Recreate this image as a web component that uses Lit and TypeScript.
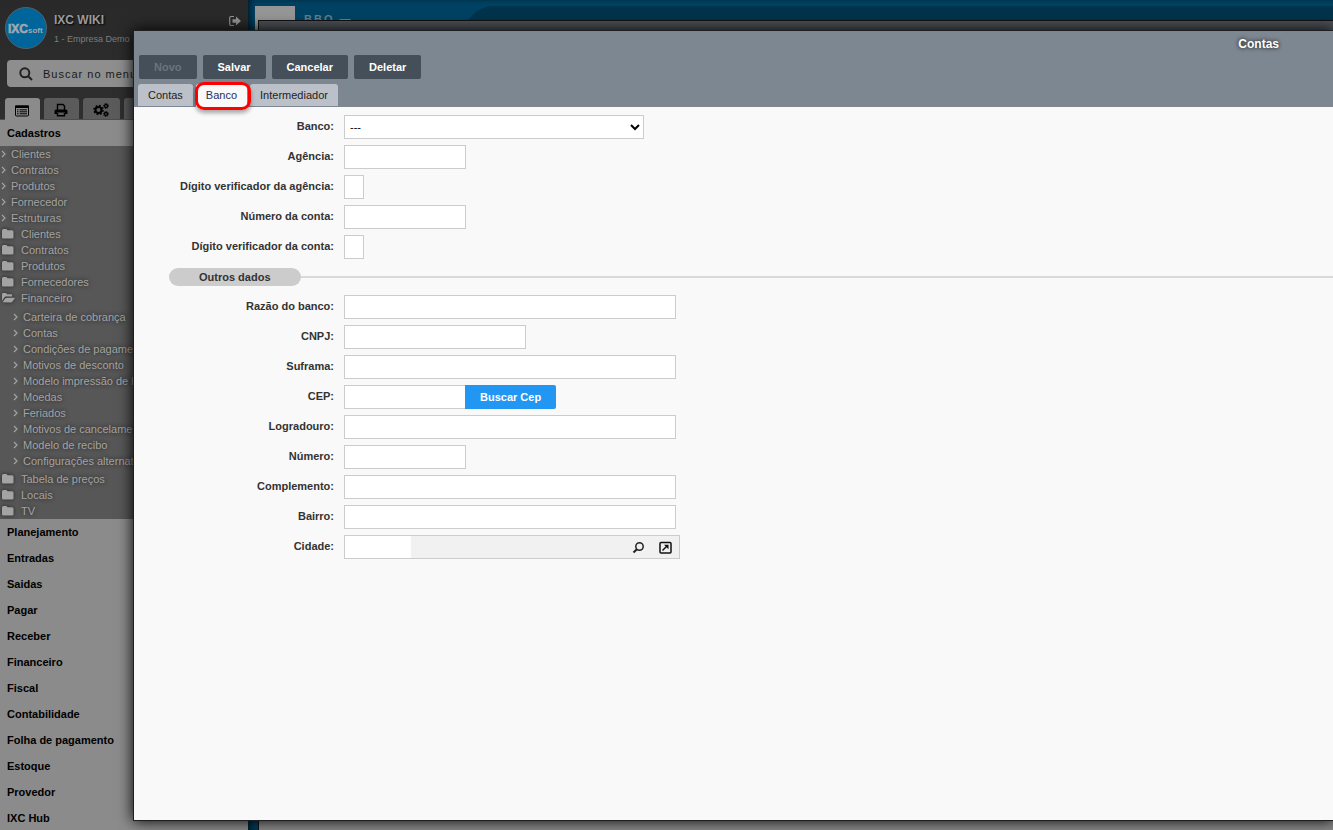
import { LitElement, html, css, svg } from "lit";
import { customElement } from "lit/decorators.js";

type Item = { label: string; kind: "link" | "folder" | "open" };

const topItems: Item[] = [
  ...["Clientes", "Contratos", "Produtos", "Fornecedor", "Estruturas"].map((label) => ({ label, kind: "link" as const })),
  ...["Clientes", "Contratos", "Produtos", "Fornecedores"].map((label) => ({ label, kind: "folder" as const })),
  { label: "Financeiro", kind: "open" },
];
const subItems = [
  "Carteira de cobrança", "Contas", "Condições de pagamento", "Motivos de desconto",
  "Modelo impressão de boleto", "Moedas", "Feriados", "Motivos de cancelamento",
  "Modelo de recibo", "Configurações alternativas",
];
const endItems: Item[] = ["Tabela de preços", "Locais", "TV"].map((label) => ({ label, kind: "folder" as const }));
const sections = [
  "Planejamento", "Entradas", "Saidas", "Pagar", "Receber", "Financeiro", "Fiscal",
  "Contabilidade", "Folha de pagamento", "Estoque", "Provedor", "IXC Hub",
];

const chevron = svg`<svg class="chev" viewBox="0 0 5 8"><path d="M1 1l3 3-3 3" fill="none" stroke="currentColor" stroke-width="1.2"/></svg>`;
const folder = svg`<svg class="fold" viewBox="0 0 13 10"><path d="M0 1.5Q0 0 1.500 0H4Q5.300 0 5.300 1.300H10Q11.500 1.300 11.500 2.800V8.300Q11.500 9.600 10 9.600H1.500Q0 9.600 0 8.300z" fill="currentColor"/></svg>`;
const folderOpen = svg`<svg class="fold" viewBox="0 0 13 10"><path d="M0 7.800V1.300Q0 0 1.300 0H3.500Q4.800 0 4.800 1.300H8.800Q10.200 1.300 10.200 2.600V3.600H4.300Q3 3.600 2.200 4.700z" fill="currentColor"/><path d="M.6 9.300L3.100 5.500Q3.700 4.700 4.700 4.700H12.300Q13 4.700 12.600 5.500L10.500 8.600Q9.900 9.400 8.900 9.400z" fill="currentColor"/></svg>`;

@customElement("side-menu")
export class SideMenu extends LitElement {
  static styles = css`
    :host {
      display: flex;
      flex-direction: column;
      min-height: 100%;
      background: #8b8b8b;
      font: 11px/16px "Liberation Sans", Arial, sans-serif;
      color: #000;
    }
    .head { background: linear-gradient(#292929, #2f2f2f); height: 120px; flex: none; }
    .brand { display: grid; grid-template-columns: 42px 1fr 12px; column-gap: 7px; padding: 7px 7px 0 5px; height: 53px; box-sizing: border-box; }
    .logo { width: 42px; height: 42px; }
    .logo text { font: bold 12px "Liberation Sans", Arial, sans-serif; fill: #9fa8ad; stroke: #9fa8ad; stroke-width: 0.6px; }
    .logo .small { font-size: 8px; stroke-width: 0; }
    .company { font-weight: bold; font-size: 12px; line-height: 16px; color: #9a9a9a; text-shadow: 1px 1px 2px #000; padding-top: 5px; }
    .branch { font-size: 9px; line-height: 12px; color: #7c7c7c; padding-top: 5px; }
    .exit { border: 0; padding: 0; height: 12px; margin-top: 8px; background: none; color: #969696; }
    .exit svg { display: block; width: 12px; height: 12px; }
    .search { display: flex; align-items: center; gap: 10px; height: 27px; margin: 7px 7px 0; padding-left: 12px; box-sizing: border-box; background: #8e8e8e; border-radius: 4px; }
    .search svg { width: 14px; height: 14px; flex: none; }
    .search input { border: 0; background: none; padding: 0; width: 160px; font: 11px/16px "Liberation Sans", Arial, sans-serif; letter-spacing: 1px; }
    .search input::placeholder { color: #1a1a1a; opacity: 1; }
    .tabs { display: flex; gap: 4px; margin-top: 11px; padding-left: 5px; height: 22px; box-sizing: border-box; border-bottom: 1px solid #4d4d4d; }
    .tab { width: 35px; height: 21px; padding: 3px 2px 0 0; border: 0; border-radius: 3px 3px 0 0; background: #5b5b5b; display: grid; place-items: center; color: #000; }
    .tab.on { background: #8b8b8b; height: 22px; }
    .tab.gears { width: 37px; }
    .tab svg { width: 16px; height: 14px; }
    .section { display: block; height: 26px; line-height: 26px; padding-left: 7px; font-weight: bold; color: #000; text-decoration: none; flex: none; }
    .tree { background: #575757; text-shadow: 0 0 4px #222; }
    .item { display: flex; align-items: center; height: 16px; color: #a3a3a3; text-decoration: none; white-space: nowrap; }
    .link { padding-left: 1px; gap: 5px; }
    .dir { padding-left: 2px; gap: 6px; }
    .sub { padding: 3px 0 2px 12px; }
    .chev { width: 5px; height: 8px; }
    .fold { width: 13px; height: 10px; filter: drop-shadow(0 0 2px #222); }
  `;

  private item(i: Item) {
    const icon = i.kind === "link" ? chevron : i.kind === "folder" ? folder : folderOpen;
    return html`<a href="#" class="item ${i.kind === "link" ? "link" : "dir"}">${icon}<span>${i.label}</span></a>`;
  }

  render() {
    return html`
      <div class="head">
        <div class="brand">
          <svg class="logo" viewBox="0 0 42 42">
            <circle cx="21" cy="21" r="20.500" fill="#00659b" stroke="#53626b"/>
            <text x="3" y="26">IXC</text><text class="small" x="23" y="26">soft</text>
          </svg>
          <div><div class="company">IXC WIKI</div><div class="branch">1 - Empresa Demo</div></div>
          <button class="exit" aria-label="Sair">
            <svg viewBox="0 0 12 12"><path d="M5 1.500H2Q.7 1.500.7 2.800V9.200Q.7 10.500 2 10.500H5" fill="none" stroke="currentColor" stroke-width="1.200"/><path d="M3.500 4.300H7V1.500L12 6 7 10.500V7.700H3.500z" fill="currentColor"/></svg>
          </button>
        </div>
        <div class="search">
          <svg viewBox="0 0 14 14" fill="none" stroke="#222" stroke-width="2"><circle cx="5.800" cy="5.800" r="4.500"/><path d="M9 9l4 4"/></svg>
          <input aria-label="Buscar no menu" placeholder="Buscar no menu">
        </div>
        <div class="tabs">
          <button class="tab on" aria-label="Menu"><svg viewBox="0 0 16 14"><rect x="1.500" y="2" width="13" height="10" rx="1" fill="none" stroke="#000"/><path d="M1 1.500h14v2.500H1z"/><path d="M3 5.800h1.500M3 7.800h1.500M3 9.800h1.500M5.500 5.800H13M5.500 7.800H13M5.500 9.800H13" stroke="#000"/></svg></button>
          <button class="tab" aria-label="Imprimir"><svg viewBox="0 0 16 14"><path d="M4.500 7V1.500H10L11.500 3V7" fill="none" stroke="#000" stroke-width="1.400"/><path d="M1.500 11V8Q1.500 6.500 3 6.500H13Q14.500 6.500 14.500 8V11H12V9.500H4V11z"/><path d="M4.500 10V12.800H11.500V10" fill="none" stroke="#000" stroke-width="1.400"/></svg></button>
          <button class="tab gears" aria-label="Configurar"><svg viewBox="0 0 16 14" fill="none" stroke="#000"><circle cx="5.500" cy="7" r="3" stroke-width="2"/><circle cx="5.500" cy="7" r="4.500" stroke-width="1.500" stroke-dasharray="1.800 1.734"/><circle cx="13" cy="3" r="1.500" stroke-width="1.300"/><circle cx="13" cy="3" r="2.500" stroke-dasharray="1 .963"/><circle cx="13" cy="11" r="1.500" stroke-width="1.300"/><circle cx="13" cy="11" r="2.500" stroke-dasharray="1 .963"/></svg></button>
          <button class="tab" aria-label="Mais"></button>
        </div>
      </div>
      <a href="#" class="section">Cadastros</a>
      <nav class="tree">
        ${topItems.map((i) => this.item(i))}
        <div class="sub">${subItems.map((label) => this.item({ label, kind: "link" }))}</div>
        ${endItems.map((i) => this.item(i))}
      </nav>
      ${sections.map((s) => html`<a href="#" class="section">${s}</a>`)}
    `;
  }
}

type Field = { id: string; label: string; size: string };

const accountFields: Field[] = [
  { id: "agencia", label: "Agência:", size: "mid" },
  { id: "dv-agencia", label: "Dígito verificador da agência:", size: "digit" },
  { id: "conta", label: "Número da conta:", size: "mid" },
  { id: "dv-conta", label: "Dígito verificador da conta:", size: "digit" },
];
const bankFields: Field[] = [
  { id: "razao", label: "Razão do banco:", size: "wide" },
  { id: "cnpj", label: "CNPJ:", size: "doc" },
  { id: "suframa", label: "Suframa:", size: "wide" },
  { id: "cep", label: "CEP:", size: "mid" },
  { id: "logradouro", label: "Logradouro:", size: "wide" },
  { id: "numero", label: "Número:", size: "mid" },
  { id: "complemento", label: "Complemento:", size: "wide" },
  { id: "bairro", label: "Bairro:", size: "wide" },
];

@customElement("account-dialog")
export class AccountDialog extends LitElement {
  static styles = css`
    :host {
      display: flex;
      flex-direction: column;
      box-sizing: border-box;
      border: 1px solid #1c2023;
      background: #f9f9f9;
      box-shadow: 0 0 14px #000;
      font: 11px/16px "Liberation Sans", Arial, sans-serif;
      color: #333;
      overflow: hidden;
    }
    :host * { box-sizing: border-box; }
    .top { background: #7d8791; height: 76px; flex: none; padding-left: 4px; }
    .title { height: 24px; line-height: 26px; margin: 0; padding-right: 54px; text-align: right; font-size: 12px; font-weight: bold; color: #fff; text-shadow: 0 0 4px #000; }
    .actions { display: flex; gap: 6px; padding-left: 1px; }
    .btn { height: 24px; border: 0; border-radius: 2px; padding: 0 15px; background: #454f59; color: #fff; font: bold 11px/24px "Liberation Sans", Arial, sans-serif; }
    .btn:disabled { color: #6b747c; }
    .tabs { display: flex; gap: 3px; padding-top: 5px; height: 28px; }
    .tab { height: 22px; border: 0; border-radius: 3px 3px 0 0; padding: 0 10px; background: #bcc1c9; color: #222; font: 11px/22px "Liberation Sans", Arial, sans-serif; }
    .tab.on { position: relative; z-index: 1; height: 23px; padding: 0 10px 1px; background: #f9f9f9; color: #25305a; }
    .mark { position: absolute; inset: -2px -4px -3px -1px; border: 3px solid #f00; border-radius: 9px; box-shadow: 0 3px 4px #0005; }
    form { padding-top: 8px; }
    .row { display: grid; grid-template-columns: 200px 1fr; column-gap: 10px; height: 30px; }
    label { text-align: right; font-weight: bold; line-height: 22px; }
    input, select { height: 24px; margin: 0; border: 1px solid #ccc; border-radius: 0; background: #fff; font: 11px "Liberation Sans", Arial, sans-serif; color: #000; }
    .ctl { display: flex; height: 24px; }
    select { width: 300px; padding: 0 0 0 1px; }
    .mid { width: 122px; }
    .digit { width: 20px; }
    .doc { width: 182px; }
    .wide { width: 332px; }
    .cep { height: 24px; margin-left: -1px; border: 0; border-radius: 0 2px 2px 0; padding: 0 15px; background: #2196f3; color: #fff; font: bold 11px "Liberation Sans", Arial, sans-serif; }
    .divider { display: flex; align-items: center; height: 18px; margin: 3px 0 9px 35px; }
    .pill { height: 18px; margin: 0; padding: 0 30px; border-radius: 9px; background: #ccc; font-size: 11px; line-height: 18px; }
    .rule { flex: 1; height: 2px; background: #d9d9d9; }
    .lookup { display: flex; align-items: center; width: 336px; height: 24px; border: 1px solid #ccc; background: #f1f1f1; }
    .lookup input { width: 66px; height: 22px; border: 0; margin-right: auto; }
    .icon { width: 13px; height: 13px; padding: 0; border: 0; background: none; }
    .icon svg { display: block; width: 13px; height: 13px; }
    .find { margin-right: 14px; }
    .open { margin-right: 7px; }
  `;

  private row(f: Field) {
    return html`<div class="row"><label for=${f.id}>${f.label}</label>
      <div class="ctl"><input id=${f.id} class=${f.size}>${f.id === "cep" ? html`<button type="button" class="cep">Buscar Cep</button>` : ""}</div></div>`;
  }

  render() {
    return html`
      <header class="top">
        <h1 class="title">Contas</h1>
        <div class="actions">
          <button class="btn" disabled>Novo</button>
          <button class="btn">Salvar</button>
          <button class="btn">Cancelar</button>
          <button class="btn">Deletar</button>
        </div>
        <div class="tabs">
          <button class="tab">Contas</button>
          <button class="tab on">Banco<span class="mark"></span></button>
          <button class="tab">Intermediador</button>
        </div>
      </header>
      <form>
        <div class="row"><label for="banco">Banco:</label>
          <div class="ctl"><select id="banco"><option>---</option></select></div></div>
        ${accountFields.map((f) => this.row(f))}
        <div class="divider"><h2 class="pill">Outros dados</h2><span class="rule"></span></div>
        ${bankFields.map((f) => this.row(f))}
        <div class="row"><label for="cidade">Cidade:</label>
          <div class="lookup"><input id="cidade">
            <button type="button" class="icon find" aria-label="Pesquisar"><svg viewBox="0 0 13 13" fill="none" stroke="#222"><circle cx="7.500" cy="5.500" r="3.700" stroke-width="1.500"/><path d="M4.900 8.200L1.500 11.500" stroke-width="2"/></svg></button>
            <button type="button" class="icon open" aria-label="Abrir"><svg viewBox="0 0 13 13"><rect x="1" y="1.500" width="11" height="10.500" rx="1" fill="none" stroke="#111" stroke-width="1.500"/><path d="M3.500 9.500L8 5" stroke="#111" stroke-width="1.500"/><path d="M5 3.700H9.500V8.200z" fill="#111"/></svg></button>
          </div></div>
      </form>
    `;
  }
}

@customElement("app-root")
export class AppRoot extends LitElement {
  static styles = css`
    :host { display: grid; grid-template-columns: 248px 1fr; position: relative; height: 100vh; overflow: hidden; background: #003c59; }
    .desk { position: relative; overflow: hidden; background: #004263; box-shadow: inset 4px 0 6px -2px #001824; }
    .thumb { position: absolute; left: 7px; top: 6px; width: 40px; height: 40px; background: #969696; }
    .name { position: absolute; left: 56px; top: 11px; font: bold 11px/16px "Liberation Sans", Arial, sans-serif; letter-spacing: 2px; color: #5d7f90; }
    .band { position: absolute; left: 216px; right: 0; top: 6px; height: 40px; border-radius: 30px 0 0 0; background: #00334c; }
    .back { position: absolute; left: 10px; right: -1px; top: 20px; bottom: -1px; border: 1px solid #111; background: #8b8b8b; }
    .bar { height: 86px; background: #4c5156; }
    .dialog { position: absolute; left: 133px; right: -1px; top: 30px; bottom: 9px; }
  `;

  render() {
    return html`
      <side-menu></side-menu>
      <main class="desk">
        <div class="thumb"></div>
        <div class="name">BBO —</div>
        <div class="band"></div>
        <div class="back"><div class="bar"></div></div>
      </main>
      <account-dialog class="dialog"></account-dialog>
    `;
  }
}
